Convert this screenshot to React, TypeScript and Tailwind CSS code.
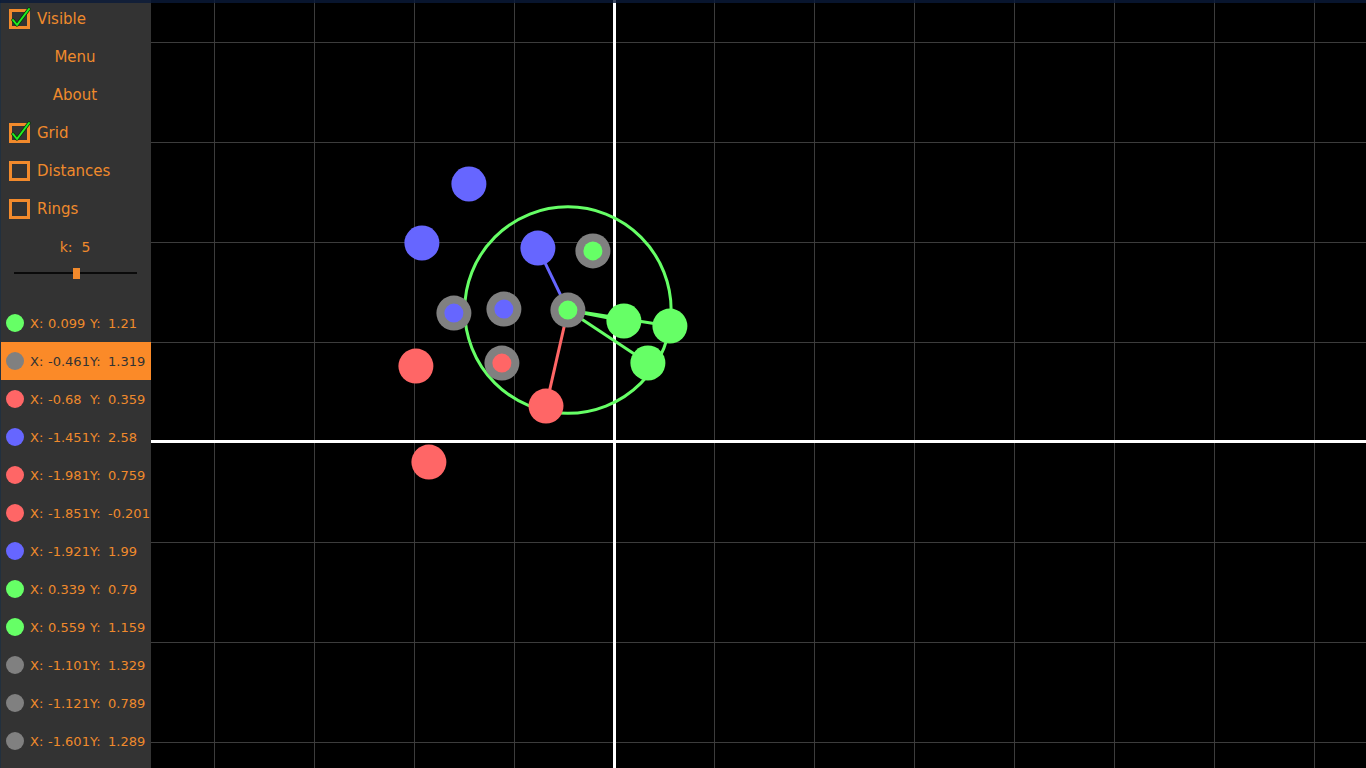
import React from "react";

type Pt = { x: number; y: number; c: "g" | "r" | "b" | "n"; p?: "g" | "r" | "b" };

const COL: Record<string, string> = {
  g: "#66ff66",
  r: "#ff6666",
  b: "#6666ff",
  n: "#808080",
};

const pts: Pt[] = [
  { x: 0.099, y: 1.21, c: "g" },
  { x: -0.461, y: 1.319, c: "n", p: "g" },
  { x: -0.68, y: 0.359, c: "r" },
  { x: -1.451, y: 2.58, c: "b" },
  { x: -1.981, y: 0.759, c: "r" },
  { x: -1.851, y: -0.201, c: "r" },
  { x: -1.921, y: 1.99, c: "b" },
  { x: 0.339, y: 0.79, c: "g" },
  { x: 0.559, y: 1.159, c: "g" },
  { x: -1.101, y: 1.329, c: "n", p: "b" },
  { x: -1.121, y: 0.789, c: "n", p: "r" },
  { x: -1.601, y: 1.289, c: "n", p: "b" },
  { x: -0.761, y: 1.939, c: "b" },
  { x: -0.211, y: 1.911, c: "n", p: "g" },
];

const OX = 614;
const OY = 442;
const sx = (x: number) => OX + x * 100;
const sy = (y: number) => OY - y * 100;

const fmt = (v: number) => String(v);

function Check({ checked }: { checked: boolean }) {
  return (
    <div className="relative w-[21px] h-[20px] border-[3px] border-[#f28a2c] shrink-0">
      {checked && (
        <svg className="absolute left-[-1px] top-[-4px] overflow-visible" width="24" height="24" viewBox="0 0 24 24">
          <path d="M2 12 L6 17 L18 1" fill="none" stroke="#0a3a0a" strokeWidth="3.5" strokeLinecap="round" strokeLinejoin="round" />
          <path d="M2 12 L6 17 L18 1" fill="none" stroke="#22ee22" strokeWidth="2" strokeLinecap="round" strokeLinejoin="round" />
        </svg>
      )}
    </div>
  );
}

function CheckRow({ label, checked }: { label: string; checked: boolean }) {
  return (
    <div className="h-[38px] flex items-center pl-[8px] gap-[7px] shrink-0">
      <Check checked={checked} />
      <span className="text-[15px] text-[#ef8a2c] leading-none">{label}</span>
    </div>
  );
}

function CenterRow({ label }: { label: string }) {
  return (
    <div className="h-[38px] flex items-center justify-center pr-[2px] shrink-0 text-[15px] text-[#ef8a2c] leading-none">
      {label}
    </div>
  );
}

export default function App() {
  const q = pts[1];
  const neighbors = pts
    .filter((p) => p.c !== "n")
    .map((p) => ({ p, d: Math.hypot(p.x - q.x, p.y - q.y) }))
    .sort((a, b) => a.d - b.d)
    .slice(0, 5);
  const radius = neighbors[4].d * 100;

  const vx: number[] = [];
  for (let x = 214; x < 1366; x += 100) if (x !== 614) vx.push(x);
  const hy: number[] = [];
  for (let y = 42; y < 768; y += 100) if (y !== 442) hy.push(y);

  const listed = pts.slice(0, 12);

  return (
    <div
      className="relative w-[1366px] h-[768px] overflow-hidden flex bg-black"
      style={{ fontFamily: '"DejaVu Sans", "Liberation Sans", sans-serif' }}
    >
      <div className="w-[151px] h-full bg-[#333333] border-l border-[#22303e] flex flex-col overflow-hidden shrink-0">
        <CheckRow label="Visible" checked />
        <CenterRow label="Menu" />
        <CenterRow label="About" />
        <CheckRow label="Grid" checked />
        <CheckRow label="Distances" checked={false} />
        <CheckRow label="Rings" checked={false} />
        <div className="h-[38px] flex items-center justify-center pr-[2px] shrink-0 text-[14px] text-[#ef8a2c] leading-none">
          k:&nbsp; 5
        </div>
        <div className="h-[38px] shrink-0 relative">
          <div className="absolute left-[13px] w-[123px] top-[6px] h-[2px] bg-[#0a0a0a]" />
          <div className="absolute left-[72px] top-[2px] w-[7px] h-[11px] bg-[#f28a2c]" />
        </div>
        {listed.map((p, i) => (
          <div
            key={i}
            className={
              "h-[38px] shrink-0 flex items-center whitespace-nowrap text-[13px] leading-none " +
              (i === 1 ? "bg-[#fb8a28] text-[#333333]" : "text-[#ef8a2c]")
            }
          >
            <div className="w-[18px] h-[18px] rounded-full ml-[5px] mr-[6px] shrink-0" style={{ background: COL[p.c] }} />
            <span className="w-[18px] shrink-0">X:</span>
            <span className="w-[42px] shrink-0">{fmt(p.x)}</span>
            <span className="w-[18px] shrink-0">Y:</span>
            <span>{fmt(p.y)}</span>
          </div>
        ))}
      </div>

      <div className="flex-1 h-full">
        <svg width="1215" height="768" viewBox="151 0 1215 768" className="block">
          <rect x="151" y="0" width="1215" height="768" fill="#000" />
          {vx.map((x) => (
            <line key={"v" + x} x1={x + 0.5} y1={0} x2={x + 0.5} y2={768} stroke="#3c3c3c" strokeWidth="1" />
          ))}
          {hy.map((y) => (
            <line key={"h" + y} x1={151} y1={y + 0.5} x2={1366} y2={y + 0.5} stroke="#3c3c3c" strokeWidth="1" />
          ))}
          <line x1={614.5} y1={0} x2={614.5} y2={768} stroke="#fff" strokeWidth="3" />
          <line x1={151} y1={441.5} x2={1366} y2={441.5} stroke="#fff" strokeWidth="3" />

          <circle cx={sx(q.x)} cy={sy(q.y)} r={radius} fill="none" stroke="#66ff66" strokeWidth="3" />
          {neighbors.map(({ p }, i) => (
            <line
              key={"n" + i}
              x1={sx(q.x)}
              y1={sy(q.y)}
              x2={sx(p.x)}
              y2={sy(p.y)}
              stroke={COL[p.c]}
              strokeWidth="3"
            />
          ))}
          {pts.map((p, i) => (
            <g key={"p" + i}>
              <circle cx={sx(p.x)} cy={sy(p.y)} r={17.5} fill={COL[p.c]} />
              {p.p && <circle cx={sx(p.x)} cy={sy(p.y)} r={9.5} fill={COL[p.p]} />}
            </g>
          ))}
        </svg>
      </div>

      <div className="absolute left-0 top-0 w-full h-[3px] bg-[#0a1a3a]/80" />
    </div>
  );
}
